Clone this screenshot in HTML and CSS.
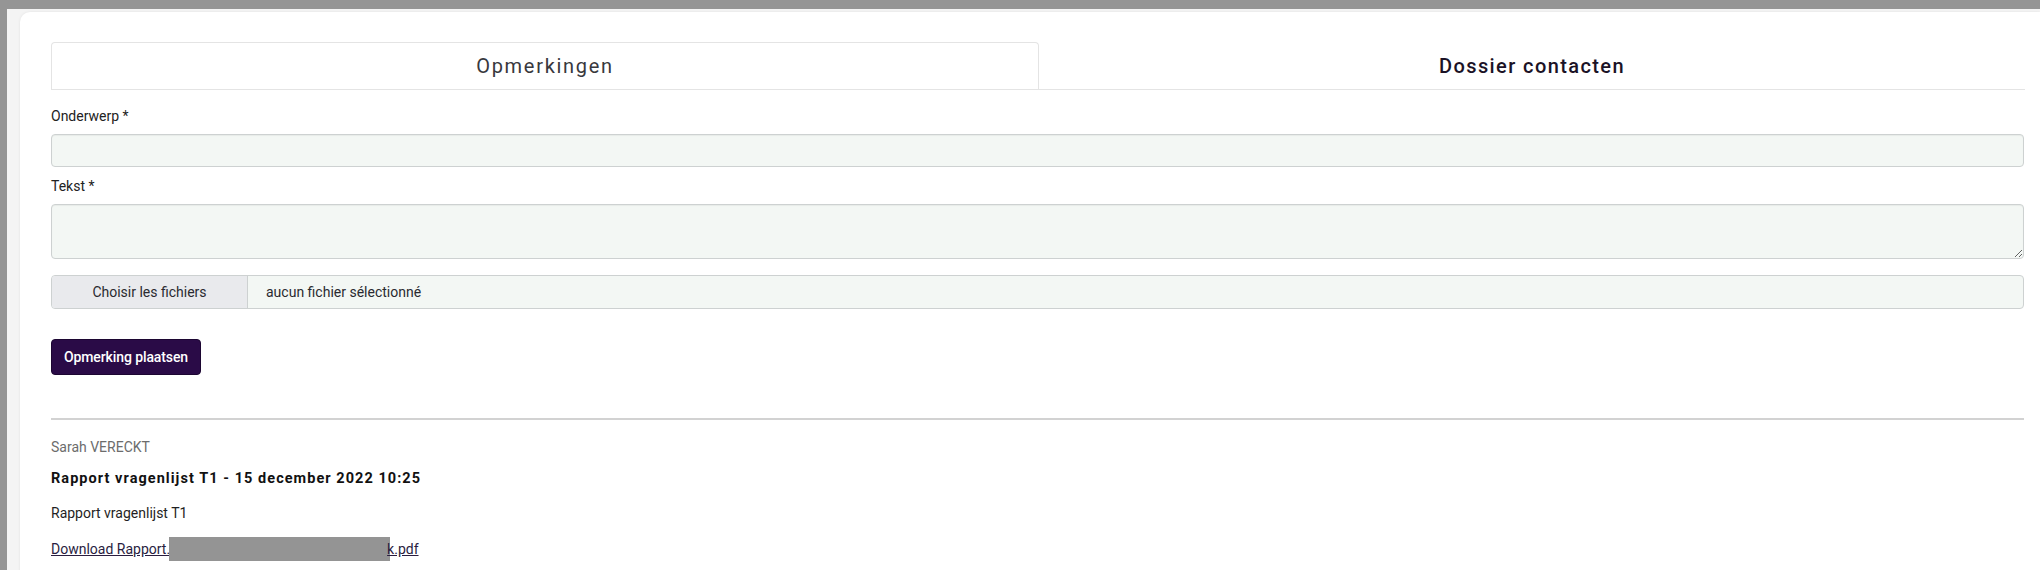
FILE: index.html
```html
<!DOCTYPE html>
<html lang="nl">
<head>
    <meta charset="UTF-8">
    <meta name="viewport" content="width=device-width, initial-scale=1.0">
    <title>Opmerkingen</title>
    <link rel="stylesheet" href="styles.css">
</head>
<body>
    <div class="frame">
        <div class="card">
            <div class="tabs">
                <div class="tab active">Opmerkingen</div>
                <div class="tab">Dossier contacten</div>
            </div>

            <form class="comment-form">
                <label class="label" for="subject">Onderwerp *</label>
                <input class="field" id="subject" type="text">

                <label class="label" for="body">Tekst *</label>
                <textarea class="field area" id="body"></textarea>

                <div class="file-field">
                    <span class="file-button">Choisir les fichiers</span>
                    <span class="file-name">aucun fichier sélectionné</span>
                </div>

                <button class="submit" type="button">Opmerking plaatsen</button>
            </form>

            <div class="comment">
                <div class="author">Sarah VERECKT</div>
                <div class="title">Rapport vragenlijst T1 - 15 december 2022 10:25</div>
                <p class="text">Rapport vragenlijst T1</p>
                <a class="download" href="#">Download Rapport.<span class="redact"></span>k.pdf</a>
            </div>
        </div>
    </div>
</body>
</html>
```

FILE: styles.css
```css
body {
    margin: 0;
    padding: 9px 0 0 7px;
    background: #959595;
    font-family: Roboto, 'Noto Sans', sans-serif;
    color: #1f1f24;
    height: 561px;
    overflow: hidden;
}

.frame {
    background: #f4f4f4;
    padding: 3px 0 0 13px;
    height: 100%;
}

.card {
    background: #fff;
    border-radius: 10px 0 0 0;
    box-shadow: 0 0 3px rgba(0, 0, 0, 0.08);
    padding: 30px 16px 0 31px;
    height: 100%;
    box-sizing: border-box;
}

.tabs {
    display: flex;
    border-bottom: 1px solid #e4e4e4;
    margin-right: -1px;
}

.tab {
    flex: 1;
    height: 47px;
    display: flex;
    align-items: center;
    justify-content: center;
    font-size: 20px;
    letter-spacing: 1.4px;
    box-sizing: border-box;
    font-weight: 500;
    color: #1b1226;
}

.tab.active {
    border: 1px solid #e4e4e4;
    border-bottom: none;
    border-radius: 4px 4px 0 0;
    font-weight: 400;
    letter-spacing: 1.7px;
    color: #38383d;
}

.comment-form {
    padding-top: 16px;
}

.label {
    display: block;
    font-size: 14px;
    line-height: 20px;
    color: #222;
    margin-bottom: 8px;
}

.field {
    display: block;
    width: 100%;
    box-sizing: border-box;
    height: 33px;
    margin: 0 0 9px;
    background: #f3f7f4;
    border: 1px solid #cdd1d1;
    box-shadow: inset 0 1px 1px rgba(0, 0, 0, 0.05);
    border-radius: 4px;
    font-family: inherit;
}

.field.area {
    height: 55px;
    margin-bottom: 16px;
}

.file-field {
    display: flex;
    height: 34px;
    box-sizing: border-box;
    border: 1px solid #cdd1d1;
    border-radius: 4px;
    background: #f3f7f4;
    overflow: hidden;
    font-size: 14px;
}

.file-button {
    width: 195px;
    flex: none;
    background: #e9eaed;
    border-right: 1px solid #cdd1d1;
    display: flex;
    align-items: center;
    justify-content: center;
    color: #2a2a30;
}

.file-name {
    display: flex;
    align-items: center;
    padding-left: 18px;
    color: #2a2a30;
}

.submit {
    margin-top: 30px;
    width: 150px;
    height: 36px;
    background: #2a0b47;
    border: 1px solid #1c0632;
    border-radius: 4px;
    color: #fff;
    font-family: inherit;
    font-size: 14px;
    font-weight: 500;
    letter-spacing: -0.1px;
}

.comment {
    margin-top: 43px;
    border-top: 2px solid #d2d2d2;
    padding-top: 17px;
}

.author {
    font-size: 14px;
    line-height: 20px;
    color: #6c6c6c;
}

.title {
    margin-top: 12px;
    font-size: 14.5px;
    line-height: 20px;
    font-weight: 700;
    letter-spacing: 1.05px;
    color: #111;
}

.text {
    margin: 14px 0 0;
    font-size: 14px;
    line-height: 20px;
    color: #1f1f24;
}

.download {
    display: inline-block;
    margin-top: 14px;
    font-size: 14px;
    line-height: 20px;
    color: #2a1d3f;
}

.redact {
    display: inline-block;
    width: 221px;
    height: 24px;
    background: #949494;
    vertical-align: -7px;
    margin-left: -1px;
    margin-right: -3px;
}
```
